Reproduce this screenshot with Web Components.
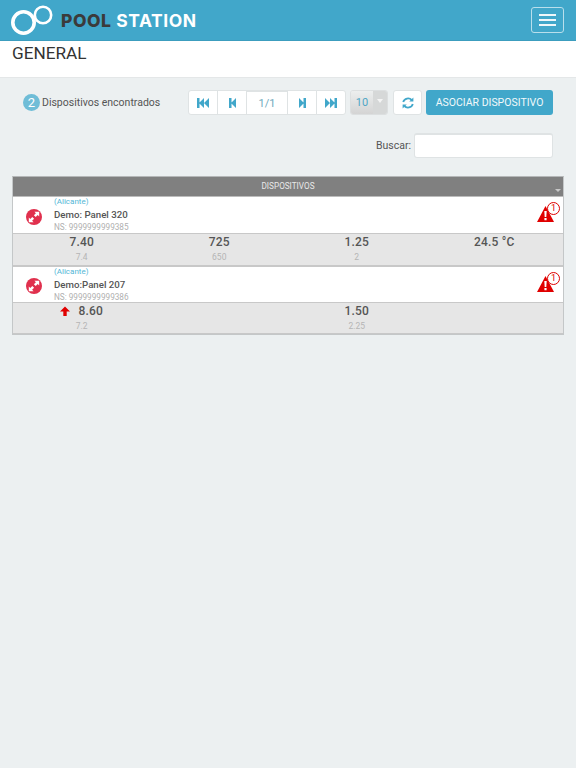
<!DOCTYPE html>
<html lang="es">
<head>
<meta charset="utf-8">
<title>Pool Station</title>
<style>
  html, body { margin: 0; padding: 0; min-height: 768px; background: #ecf0f1; }
  body { font-family: Roboto, "Liberation Sans", sans-serif; color: #555; }
</style>
</head>
<body>
<app-navbar></app-navbar>
<page-title>GENERAL</page-title>
<device-toolbar count="2"></device-toolbar>
<search-box></search-box>
<device-table title="DISPOSITIVOS">
  <device-row place="(Alicante)" name="Demo: Panel 320" serial="NS: 9999999999385" alerts="1">
    <metric-cell value="7.40" ref="7.4"></metric-cell>
    <metric-cell value="725" ref="650"></metric-cell>
    <metric-cell value="1.25" ref="2"></metric-cell>
    <metric-cell value="24.5 °C"></metric-cell>
  </device-row>
  <device-row place="(Alicante)" name="Demo:Panel 207" serial="NS: 9999999999386" alerts="1">
    <metric-cell value="8.60" ref="7.2" up></metric-cell>
    <metric-cell></metric-cell>
    <metric-cell value="1.50" ref="2.25"></metric-cell>
    <metric-cell></metric-cell>
  </device-row>
</device-table>

<script>
// small helper, every element just sets its shadow html once
class ShadowElement extends HTMLElement {
  constructor() {
    super();
    this.attachShadow({ mode: "open" });
  }
  connectedCallback() {
    this.shadowRoot.innerHTML = this.render();
  }
}

class AppNavbar extends ShadowElement {
  render() {
    return `
    <style>
      :host { display: flex; align-items: center; justify-content: space-between; height: 40px; padding: 0 12px 0 11px; background: #41a7ca; border-bottom: 1px solid #3c9dbe; }
      .brand { display: flex; align-items: center; gap: 8px; }
      svg { display: block; }
      .name { font: 700 17.5px Inter, Lato, sans-serif; letter-spacing: .55px; color: #fff; white-space: nowrap; }
      .name b { color: #3b3b3b; font-weight: 800; }
      button { box-sizing: border-box; width: 33px; height: 26px; padding: 0; background: transparent; border: 1px solid #b9dfec; border-radius: 3px; display: flex; flex-direction: column; align-items: center; justify-content: center; gap: 2.6px; }
      i { display: block; width: 17px; height: 2px; background: #eef7fa; }
    </style>
    <div class="brand">
      <svg width="42" height="30" viewBox="0 0 42 30">
        <circle cx="12.5" cy="17.5" r="10.7" fill="none" stroke="#fff" stroke-width="3.6"/>
        <circle cx="32" cy="10" r="8.2" fill="none" stroke="#fff" stroke-width="2.6"/>
      </svg>
      <span class="name"><b>POOL</b> STATION</span>
    </div>
    <button aria-label="Menu"><i></i><i></i><i></i></button>`;
  }
}

class PageTitle extends ShadowElement {
  render() {
    return `
    <style>
      :host { display: block; height: 36px; padding-left: 12px; background: #fff; border-bottom: 1px solid #e4e7e8; }
      h1 { margin: 0; font: 400 17.2px/24px Roboto, sans-serif; color: #333; }
    </style>
    <h1><slot></slot></h1>`;
  }
}

const ICONS = {
  first: [12, `<path d="M0 0h2.5v10H0zM7 0v10L2 5zM12 0v10L7 5z"/>`],
  prev: [7, `<path d="M0 0h2.5v10H0zM7 0v10L2 5z"/>`],
  next: [7, `<path d="M7 0H4.5v10H7zM0 0v10l5-5z"/>`],
  last: [12, `<path d="M12 0H9.5v10H12zM0 0v10l5-5zM5 0v10l5-5z"/>`]
};

class DeviceToolbar extends ShadowElement {
  render() {
    const btn = name => {
      const [w, d] = ICONS[name];
      return `<button class="pg"><svg width="${w}" height="10" viewBox="0 0 ${w} 10" fill="#41a7ca">${d}</svg></button>`;
    };
    return `
    <style>
      :host { display: flex; align-items: center; height: 25px; margin-top: 12px; padding: 0 23px; font: 400 10.5px Roboto, sans-serif; color: #555; }
      .count { display: flex; align-items: center; gap: 2px; width: 165px; }
      .badge { width: 17px; height: 17px; border-radius: 50%; background: #6fbdd7; color: #fff; font-size: 13px; line-height: 17px; text-align: center; }
      .pager { display: flex; height: 25px; }
      button { box-sizing: border-box; height: 25px; padding: 0; margin: 0; background: #fff; border: 1px solid #dfe3e4; display: flex; align-items: center; justify-content: center; }
      .pg { width: 30px; margin-right: -1px; }
      .pager .pg:first-child { border-radius: 3px 0 0 3px; }
      .pager .pg:last-child { border-radius: 0 3px 3px 0; margin-right: 0; }
      .page { box-sizing: border-box; width: 42px; margin-right: -1px; border: 1px solid #dfe3e4; border-top: 2px solid #dfe3e4; background: #fff; color: #6fa9bd; text-align: center; line-height: 23px; font-size: 11px; }
      .size { display: flex; width: 38px; height: 25px; margin-left: 4px; border-radius: 3px; overflow: hidden; border: 1px solid #dcdfe0; box-sizing: border-box; font-size: 11px; }
      .size span { width: 22px; background: linear-gradient(#eceeee, #d4d4d4); color: #4fa6c5; text-align: center; line-height: 23px; }
      .size em { flex: 1; background: #d6d8d8; display: flex; align-items: flex-start; justify-content: center; padding-top: 8px; }
      .size em::before { content: ""; border: 3px solid transparent; border-top: 4px solid #f4f4f4; }
      .refresh { width: 29px; margin-left: 5px; border-radius: 3px; }
      .primary { width: 127px; margin-left: 4px; border: 0; border-radius: 3px; background: #41a7ca; color: #f2f9fb; font: 400 10.5px Roboto, sans-serif; white-space: nowrap; }
    </style>
    <div class="count"><span class="badge">${this.getAttribute("count")}</span><span>Dispositivos encontrados</span></div>
    <div class="pager">
      ${btn("first")}${btn("prev")}<div class="page">1/1</div>${btn("next")}${btn("last")}
    </div>
    <div class="size"><span>10</span><em></em></div>
    <button class="refresh" aria-label="Actualizar">
      <svg width="12" height="12" viewBox="0 0 12 12" fill="none" stroke="#41a7ca" stroke-width="1.8">
        <path d="M1.2 5A5 5 0 0 1 9.8 3.2"/><path d="M10.8 7A5 5 0 0 1 2.2 8.8"/>
        <path d="M11.4 .4v4.2H7.2z" fill="#41a7ca" stroke="none"/><path d="M.6 11.6V7.4h4.2z" fill="#41a7ca" stroke="none"/>
      </svg>
    </button>
    <button class="primary">ASOCIAR DISPOSITIVO</button>`;
  }
}

class SearchBox extends ShadowElement {
  render() {
    return `
    <style>
      :host { display: flex; justify-content: flex-end; align-items: center; gap: 3px; height: 25px; margin-top: 18px; padding-right: 23px; font: 400 10.5px Roboto, sans-serif; color: #555; }
      input { box-sizing: border-box; width: 139px; height: 25px; margin: 0; border: 1px solid #dfe3e4; border-top-width: 2px; border-radius: 3px; background: #fff; outline: 0; }
    </style>
    <label for="q">Buscar:</label><input id="q" type="text">`;
  }
}

class DeviceTable extends ShadowElement {
  render() {
    return `
    <style>
      :host { display: block; box-sizing: border-box; margin: 18px 12px 0; border: 1px solid #c4c7c8; border-top: 1px solid #b5b7b8; }
      .head { position: relative; height: 19px; background: #808080; color: #e8e8e8; font: 400 8.2px/19px Roboto, sans-serif; text-align: center; border-bottom: 1px solid #bcbcbc; }
      .head::after { content: ""; position: absolute; right: 2px; top: 12px; border: 3.5px solid transparent; border-top: 3.5px solid #c8c8c8; }
    </style>
    <div class="head">${this.getAttribute("title")}</div>
    <slot></slot>`;
  }
}

class DeviceRow extends ShadowElement {
  render() {
    return `
    <style>
      :host { display: block; font-family: Roboto, sans-serif; }
      .info { display: flex; align-items: center; box-sizing: border-box; height: 36.5px; padding: 0 3px 0 13px; background: #fff; border-bottom: 1px solid #c8c8c8; }
      .status { width: 16px; height: 16px; margin: 4px 12px 0 0; flex: none; }
      .text { flex: 1; display: flex; flex-direction: column; }
      .place { font-size: 8px; line-height: 12px; color: #52b6d6; }
      .name { font-size: 9.7px; font-weight: 500; line-height: 13px; color: #555; }
      .serial { font-size: 8.2px; line-height: 12px; color: #b0b0b0; }
      .alert { position: relative; width: 23px; height: 24px; margin-top: -9px; }
      .alert svg { position: absolute; left: 0; top: 8px; }
      .alert span { position: absolute; right: 0; top: 4px; box-sizing: border-box; width: 13px; height: 13px; border: 1px solid #e00000; border-radius: 50%; background: #fff; color: #d00; font-size: 9px; line-height: 11px; text-align: center; }
      .metrics { box-sizing: border-box; display: grid; grid-template-columns: repeat(4, 1fr); height: 33px; background: #e6e6e6; border-bottom: 2px solid #c8c8c8; }
      :host(:last-child) .metrics { height: 31px; border-bottom-width: 1px; }
    </style>
    <div class="info">
      <svg class="status" viewBox="0 0 16 16">
        <circle cx="8" cy="8" r="8" fill="#e0304d"/>
        <path d="M8.4 2.8h4.8v4.8l-1.5-1.5-2 2-1.8-1.8 2-2zM7.6 13.2H2.8V8.4l1.5 1.5 2-2 1.8 1.8-2 2z" fill="#fff"/>
      </svg>
      <div class="text">
        <span class="place">${this.getAttribute("place")}</span>
        <span class="name">${this.getAttribute("name")}</span>
        <span class="serial">${this.getAttribute("serial")}</span>
      </div>
      <div class="alert">
        <svg width="17" height="16" viewBox="0 0 17 16">
          <path d="M8.5 0 17 16H0z" fill="#e00000"/>
          <path d="M7.3 5h2.4l-.4 6H7.7zM7.4 12h2.2v2.2H7.4z" fill="#fff"/>
        </svg>
        <span>${this.getAttribute("alerts")}</span>
      </div>
    </div>
    <div class="metrics"><slot></slot></div>`;
  }
}

class MetricCell extends ShadowElement {
  render() {
    const value = this.getAttribute("value") || "";
    const ref = this.getAttribute("ref") || "";
    const arrow = this.hasAttribute("up")
      ? `<svg width="10" height="10" viewBox="0 0 10 10"><path d="M5 .5 10 5.6H6.7V10H3.3V5.6H0z" fill="#e00000"/></svg>` : "";
    return `
    <style>
      :host { display: block; text-align: center; font-family: Roboto, sans-serif; }
      .value { display: flex; justify-content: center; align-items: center; gap: 8px; height: 16px; font-size: 12px; font-weight: 500; letter-spacing: .2px; color: #555; }
      .ref { margin-top: 3px; font-size: 8.5px; line-height: 8px; color: #b5b5b5; }
    </style>
    <div class="value">${arrow}<span>${value}</span></div>
    <div class="ref">${ref}</div>`;
  }
}

customElements.define("app-navbar", AppNavbar);
customElements.define("page-title", PageTitle);
customElements.define("device-toolbar", DeviceToolbar);
customElements.define("search-box", SearchBox);
customElements.define("device-table", DeviceTable);
customElements.define("device-row", DeviceRow);
customElements.define("metric-cell", MetricCell);
</script>
</body>
</html>
